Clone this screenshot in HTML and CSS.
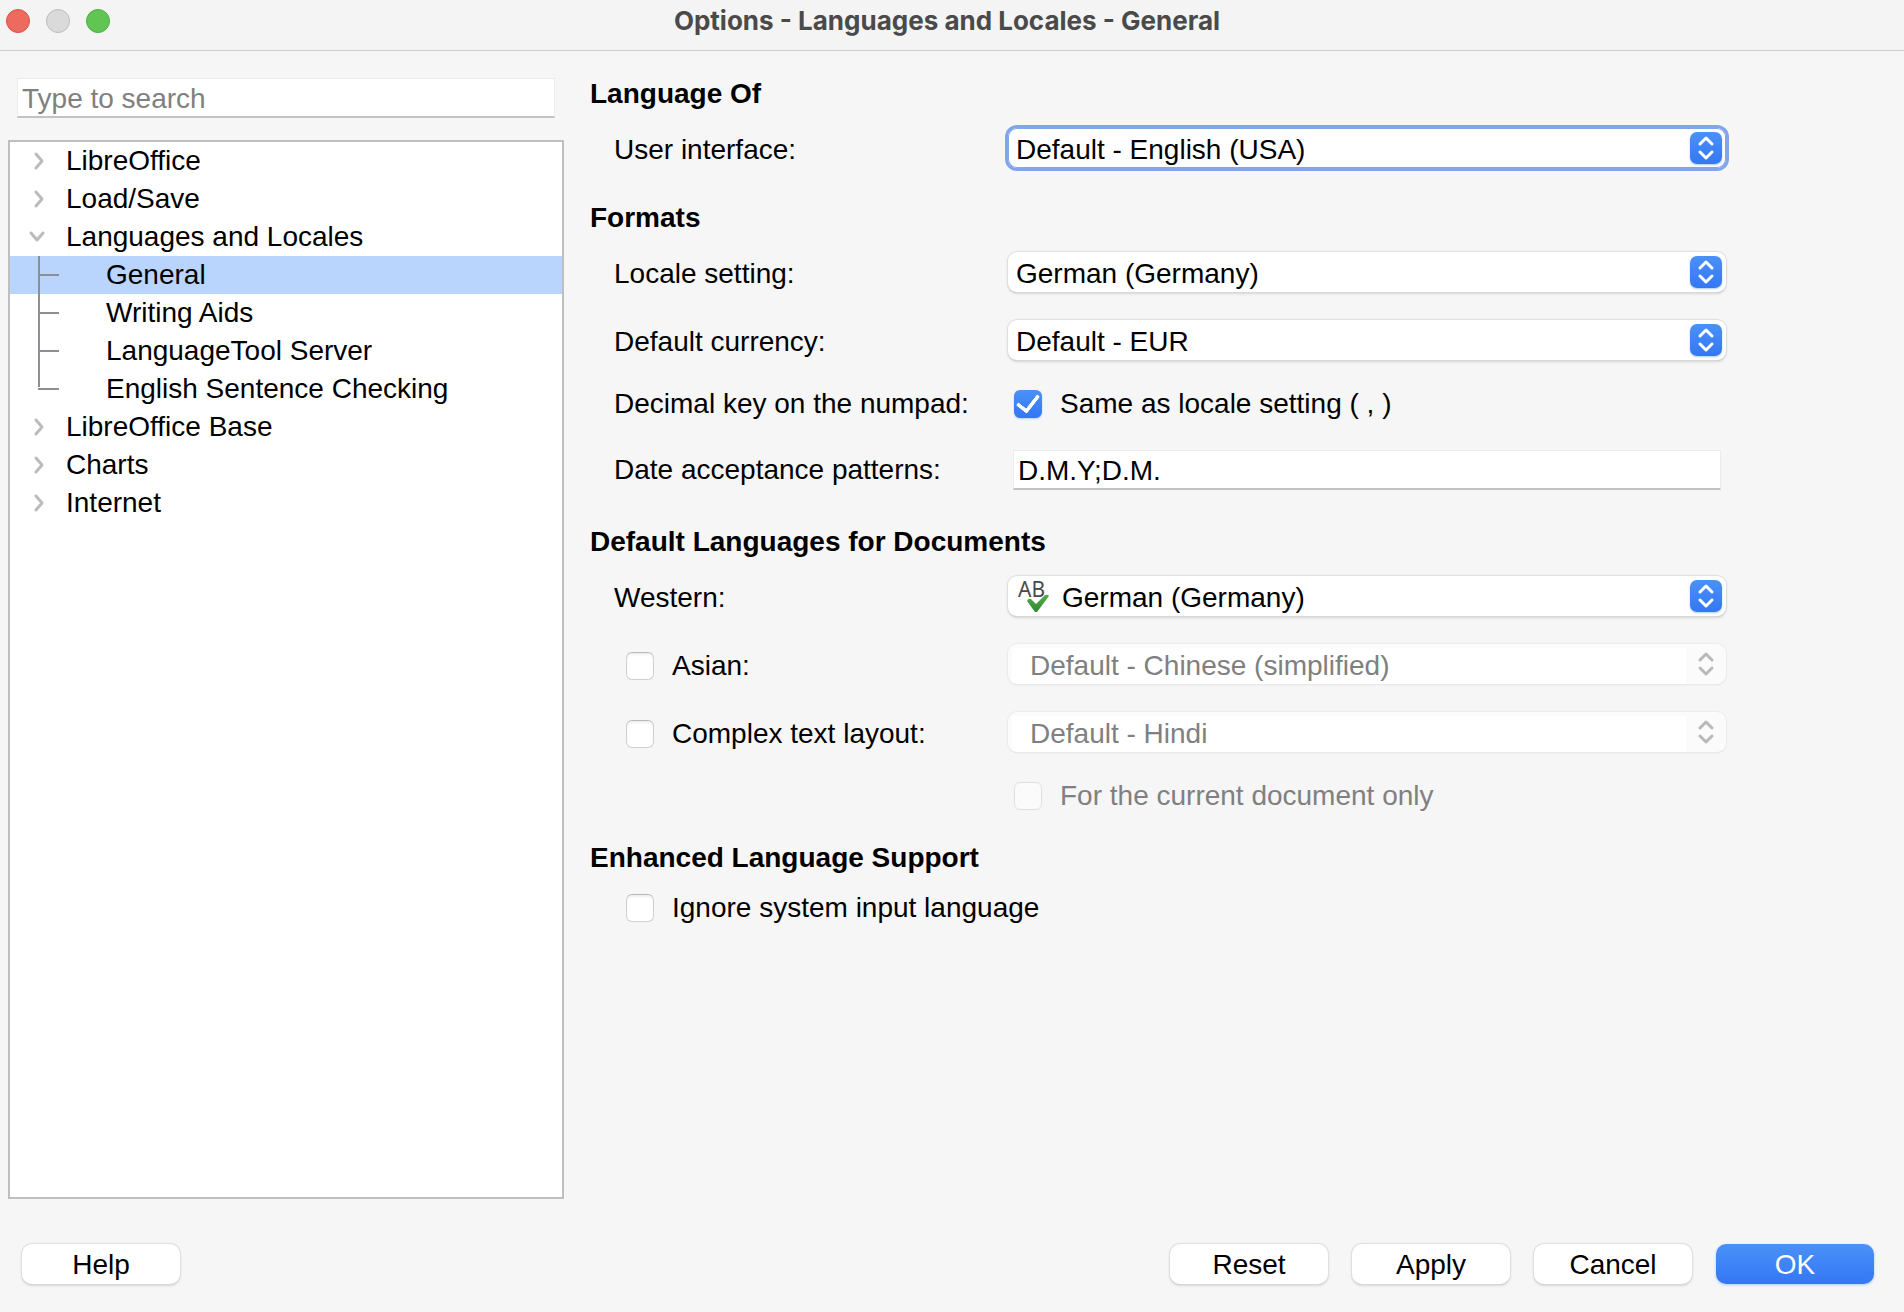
FILE: index.html
```
<!DOCTYPE html>
<html lang="en">
<head>
  <meta charset="UTF-8" />
  <meta name="viewport" content="width=device-width, initial-scale=1.0" />
  <title>Options - Languages and Locales - General</title>
  <link rel="stylesheet" href="styles.css">
</head>
<body>
  <svg class="defs" width="0" height="0" aria-hidden="true">
    <symbol id="right" viewBox="0 0 20 20"><path d="M8 3l6 7-6 7" /></symbol>
    <symbol id="down" viewBox="0 0 20 20"><path d="M3 6l6 7 6-7" /></symbol>
    <symbol id="updown" viewBox="0 0 32 32"><path d="M10 12l6-6 6 6M10 20l6 6 6-6" /></symbol>
  </svg>

  <header class="titlebar">
    <div class="lights">
      <button class="light close" aria-label="Close"></button>
      <button class="light minimize" aria-label="Minimize" disabled></button>
      <button class="light maximize" aria-label="Maximize"></button>
    </div>
    <h1>Options - Languages and Locales - General</h1>
  </header>

  <main class="content">
    <aside class="sidebar">
      <input class="text-input search" type="text" placeholder="Type to search" aria-label="Type to search" />
      <ul class="tree">
        <li><button class="item"><svg><use href="#right" /></svg>LibreOffice</button></li>
        <li><button class="item"><svg><use href="#right" /></svg>Load/Save</button></li>
        <li>
          <button class="item"><svg><use href="#down" /></svg>Languages and Locales</button>
          <ul class="children">
            <li><button class="item selected">General</button></li>
            <li><button class="item">Writing Aids</button></li>
            <li><button class="item">LanguageTool Server</button></li>
            <li><button class="item">English Sentence Checking</button></li>
          </ul>
        </li>
        <li><button class="item"><svg><use href="#right" /></svg>LibreOffice Base</button></li>
        <li><button class="item"><svg><use href="#right" /></svg>Charts</button></li>
        <li><button class="item"><svg><use href="#right" /></svg>Internet</button></li>
      </ul>
    </aside>

    <form class="panel" id="options">
      <section>
        <h2>Language Of</h2>
        <div class="row">
          <label for="ui">User interface:</label>
          <div class="dropdown focused">
            <select id="ui"><option>Default - English (USA)</option></select>
            <svg><use href="#updown" /></svg>
          </div>
        </div>
      </section>

      <section>
        <h2>Formats</h2>
        <div class="row">
          <label for="locale">Locale setting:</label>
          <div class="dropdown">
            <select id="locale"><option>German (Germany)</option></select>
            <svg><use href="#updown" /></svg>
          </div>
        </div>
        <div class="row">
          <label for="currency">Default currency:</label>
          <div class="dropdown">
            <select id="currency"><option>Default - EUR</option></select>
            <svg><use href="#updown" /></svg>
          </div>
        </div>
        <div class="row check-row">
          <span>Decimal key on the numpad:</span>
          <label class="check"><input type="checkbox" checked />Same as locale setting ( , )</label>
        </div>
        <div class="row input-row">
          <label for="patterns">Date acceptance patterns:</label>
          <input class="text-input" id="patterns" type="text" value="D.M.Y;D.M." />
        </div>
      </section>

      <section>
        <h2>Default Languages for Documents</h2>
        <div class="row">
          <label for="western">Western:</label>
          <div class="dropdown with-icon">
            <select id="western"><option>German (Germany)</option></select>
            <svg class="spell" viewBox="0 0 34 34" aria-hidden="true">
              <defs>
                <linearGradient id="green" x1="0" y1="0" x2="0" y2="1">
                  <stop offset="0" stop-color="#55ad4b" />
                  <stop offset="1" stop-color="#31872f" />
                </linearGradient>
              </defs>
              <text x="0" y="19">AB</text>
              <path d="M9 23q1-3 4-2l5 5 9-9q3-1 4 1L19 34h-2z" />
            </svg>
            <svg><use href="#updown" /></svg>
          </div>
        </div>
        <div class="row">
          <label class="check"><input type="checkbox" />Asian:</label>
          <div class="dropdown">
            <select aria-label="Asian" disabled><option>Default - Chinese (simplified)</option></select>
            <svg><use href="#updown" /></svg>
          </div>
        </div>
        <div class="row">
          <label class="check"><input type="checkbox" />Complex text layout:</label>
          <div class="dropdown">
            <select aria-label="Complex text layout" disabled><option>Default - Hindi</option></select>
            <svg><use href="#updown" /></svg>
          </div>
        </div>
        <div class="row check-row">
          <span></span>
          <label class="check disabled"><input type="checkbox" disabled />For the current document only</label>
        </div>
      </section>

      <section class="enhanced">
        <h2>Enhanced Language Support</h2>
        <div class="row check-row">
          <label class="check wide"><input type="checkbox" />Ignore system input language</label>
        </div>
      </section>
    </form>
  </main>

  <footer class="buttons">
    <button class="btn help" type="button">Help</button>
    <button class="btn" type="reset" form="options">Reset</button>
    <button class="btn" type="button">Apply</button>
    <button class="btn" type="button">Cancel</button>
    <button class="btn primary" type="submit" form="options">OK</button>
  </footer>
</body>
</html>
```
FILE: styles.css
```
* {
  box-sizing: border-box;
}

body {
  margin: 0;
  min-height: 100vh;
  display: flex;
  flex-direction: column;
  font-family: "Liberation Sans", Arial, sans-serif;
  font-size: 28px;
  line-height: 32px;
  color: #000;
  background: #f6f6f6;
}

button, input, select {
  font: inherit;
  color: inherit;
}

.defs {
  position: absolute;
}

svg {
  fill: none;
  stroke: #bcbcbc;
  stroke-width: 3;
  stroke-linecap: round;
  stroke-linejoin: round;
}

/* title bar */
.titlebar {
  display: flex;
  align-items: center;
  height: 51px;
  padding: 0 16px 8px 6px;
  background: #f4f4f4;
  border-bottom: 1px solid #cdcdcd;
}

.lights {
  display: flex;
  flex: 1;
  gap: 16px;
}

.light {
  width: 24px;
  height: 24px;
  padding: 0;
  border: 1px solid #d9534a;
  border-radius: 50%;
  background: #ec6a5e;
}

.minimize {
  border-color: #bdbdbd;
  background: #dadada;
}

.maximize {
  border-color: #4fae43;
  background: #61c554;
}

.titlebar h1 {
  margin: 0;
  font-family: Inter, "Liberation Sans", sans-serif;
  font-size: 26px;
  font-weight: 700;
  color: #4a4a4a;
}

.titlebar::after {
  content: "";
  flex: 1;
}

/* tree */
.content {
  flex: 1;
  display: flex;
}

.sidebar {
  flex: 0 0 556px;
  display: flex;
  flex-direction: column;
  gap: 22px;
  margin-left: 8px;
  padding-top: 27px;
}

.text-input {
  height: 40px;
  min-width: 0;
  padding: 2px 4px 0;
  border: 1px solid #ebebeb;
  border-bottom: 2px solid #c3c3c3;
  background: #fff;
  outline: none;
}

.text-input::placeholder {
  color: #808080;
  opacity: 1;
}

.search {
  margin: 0 9px;
}

.tree {
  flex: 1;
  margin: 0;
  padding: 0;
  list-style: none;
  background: #fff;
  border: 2px solid #bfbfbf;
}

.item {
  display: flex;
  align-items: center;
  gap: 18px;
  width: 100%;
  height: 38px;
  padding: 0 0 0 18px;
  border: none;
  background: none;
  text-align: left;
}

.item svg {
  width: 20px;
  height: 20px;
}

.children {
  margin: 0;
  padding: 0;
  list-style: none;
}

.children li {
  position: relative;
}

.children .item {
  padding-left: 96px;
}

.children .selected {
  background: #b9d5fd;
}

/* connector lines */
.children li::before {
  content: "";
  position: absolute;
  left: 28px;
  top: 0;
  width: 2px;
  height: 38px;
  background: #8e8e93;
}

.children li:last-child::before {
  height: 17px;
}

.children li::after {
  content: "";
  position: absolute;
  left: 28px;
  top: 18px;
  width: 21px;
  height: 2px;
  background: #8e8e93;
}

/* options */
.panel {
  flex: 1;
  display: flex;
  flex-direction: column;
  gap: 34px;
  padding: 27px 178px 0 26px;
}

.panel section {
  display: flex;
  flex-direction: column;
  gap: 28px;
}

.panel .enhanced {
  margin-top: -4px;
}

h2 {
  margin: 0 0 -10px;
  font-size: 28px;
  line-height: 32px;
}

.row {
  display: grid;
  grid-template-columns: 394px 1fr;
  align-items: center;
  min-height: 40px;
  padding-left: 24px;
}

.row > label:first-child {
  padding-top: 3px;
}

.check-row {
  min-height: 32px;
}

.check-row > label:first-child {
  padding-top: 0;
}

.input-row {
  min-height: 44px;
}

.input-row > label:first-child {
  padding-top: 0;
}

.input-row .text-input {
  margin: 0 5px;
}

.check {
  display: flex;
  align-items: center;
  gap: 18px;
  padding-left: 6px;
}

.check:first-child {
  padding-left: 12px;
}

.wide {
  grid-column: 1 / -1;
}

.check.disabled {
  color: #808080;
}

.check input {
  appearance: none;
  width: 28px;
  height: 28px;
  margin: 0;
  border: 1px solid #d0d0d0;
  border-top-color: #b8b8b8;
  border-radius: 6px;
  background: #fff;
  box-shadow: inset 0 2px 2px #f0f0f0;
}

.check input:checked {
  display: grid;
  place-items: center;
  border: none;
  background: linear-gradient(#4b91f7, #3377f5);
  box-shadow: 0 1px 2px #b9cff5;
}

.check input:checked::after {
  content: "";
  width: 10px;
  height: 18px;
  margin-bottom: 6px;
  border: solid #fff;
  border-width: 0 4px 4px 0;
  border-radius: 2px;
  transform: rotate(38deg);
}

.check input:disabled {
  border-color: #dfdfdf;
  background: #fbfbfb;
  box-shadow: none;
}

.dropdown {
  position: relative;
  height: 40px;
}

.dropdown select {
  appearance: none;
  width: 100%;
  height: 40px;
  padding: 3px 50px 0 8px;
  border: none;
  border-radius: 9px;
  background: #fff;
  box-shadow: 0 0 1px 1px #dedede, 0 1px 1px #a8a8a8, 0 2px 3px #dcdcdc;
  outline: none;
}

.dropdown.focused select {
  box-shadow: inset 0 0 0 1px #80a5ea, 0 0 0 3px #80a5ea;
}

.dropdown svg {
  position: absolute;
  right: 4px;
  top: 4px;
  width: 32px;
  height: 32px;
  border-radius: 7px;
  background: linear-gradient(#4b91f7, #3377f5);
  box-shadow: 0 1px 2px #a9cbfa;
  stroke: #fff;
  pointer-events: none;
}

.dropdown select:disabled {
  padding-left: 22px;
  color: #808080;
  opacity: 1;
  background: linear-gradient(#fff, #fff) 4px 4px / calc(100% - 44px) 36px no-repeat #fbfbfb;
  box-shadow: 0 0 1px 1px #ececec, 0 1px 1px #d2d2d2;
}

.dropdown select:disabled + svg {
  background: none;
  box-shadow: none;
  stroke: #b9b9b9;
}

.with-icon select {
  padding-left: 54px;
}

.dropdown .spell {
  left: 10px;
  top: 2px;
  width: 34px;
  height: 34px;
  overflow: visible;
  border-radius: 0;
  background: none;
  box-shadow: none;
  stroke: none;
}

.spell text {
  font-family: "Noto Sans", sans-serif;
  font-size: 21px;
  fill: #4a4a4c;
}

.spell path {
  fill: url(#green);
}

/* bottom buttons */
.buttons {
  display: flex;
  gap: 24px;
  padding: 45px 30px 28px 22px;
}

.btn {
  width: 158px;
  height: 40px;
  padding: 2px 0 0;
  border: none;
  border-radius: 10px;
  background: #fff;
  box-shadow: 0 0 1px 1px #dedede, 0 1px 1px #a8a8a8, 0 2px 3px #dcdcdc;
}

.help {
  margin-right: auto;
}

.primary {
  color: #fff;
  background: linear-gradient(#4b91f7, #3377f5);
  box-shadow: 0 1px 3px #a9cbfa;
}
```
